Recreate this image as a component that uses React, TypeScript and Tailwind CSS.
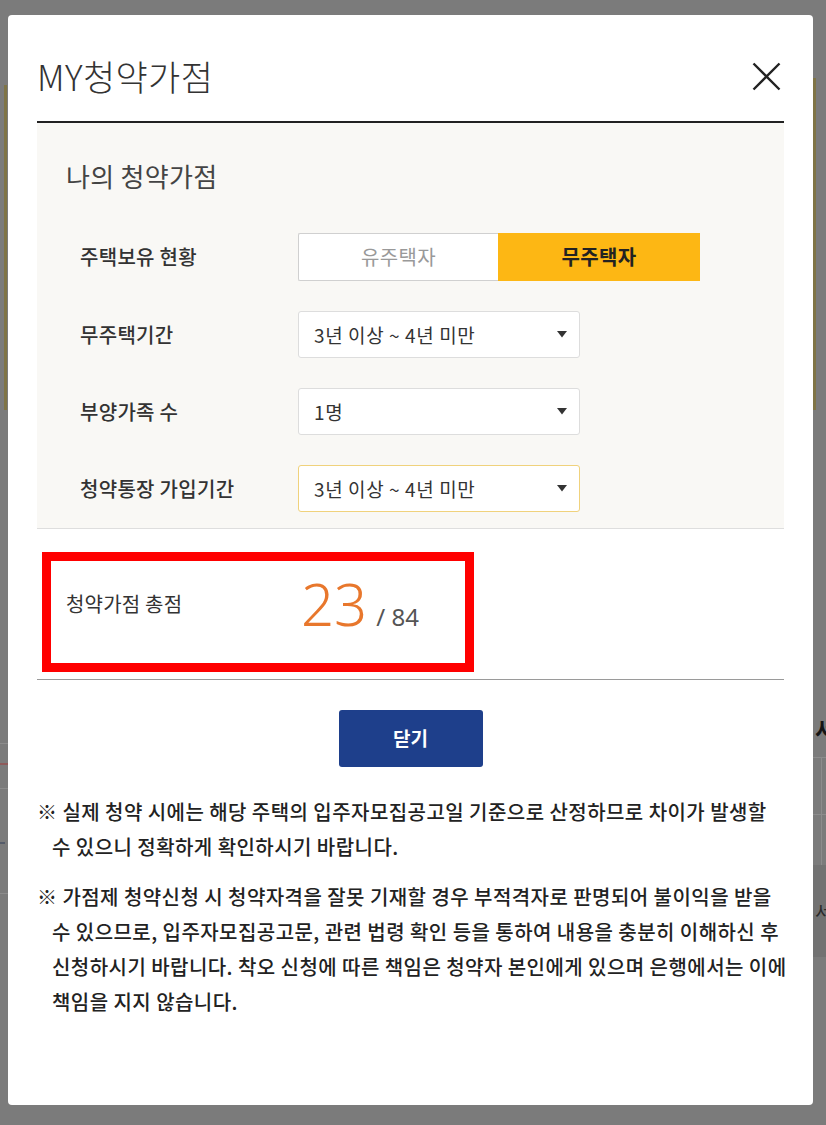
import React from "react";

const KR = "font-['Noto_Sans_CJK_KR','Noto_Sans',sans-serif]";

function Caret() {
  return (
    <svg width="10" height="7" viewBox="0 0 10 7" className="shrink-0">
      <polygon points="0,0 10,0 5,6.5" fill="#333" />
    </svg>
  );
}

function SelectBox({ value, active }: { value: string; active?: boolean }) {
  return (
    <div
      className={
        "w-[282px] h-[47px] bg-white rounded-[3px] border flex items-center justify-between pl-[15px] pr-[12px] " +
        (active ? "border-[#f0d27c]" : "border-[#dddddd]")
      }
    >
      <span className="text-[19px] tracking-[0.6px] text-[#333] leading-none">{value}</span>
      <Caret />
    </div>
  );
}

function Row({ label, children }: { label: string; children: React.ReactNode }) {
  return (
    <div className="flex items-center">
      <div className="w-[232px] pl-[14px] text-[20px] tracking-[0.3px] font-medium text-[#333] leading-none">{label}</div>
      {children}
    </div>
  );
}

export default function App() {
  return (
    <div className={"w-[826px] h-[1125px] bg-[#7b7b7b] flex overflow-hidden " + KR}>
      {/* left strip of background page */}
      <div className="w-[8px] shrink-0 flex flex-col">
        <div className="mt-[85px] ml-[4px] w-[3px] h-[325px] bg-[#7f7446]" />
        <div className="mt-[333px] h-px bg-[#8c8c8c]" />
        <div className="mt-[19px] h-[2px] bg-[#8e5a5a]" />
        <div className="mt-[23px] h-px bg-[#8c8c8c]" />
        <div className="mt-[53px] h-[2px] w-[5px] bg-[#555c6a]" />
        <div className="mt-[49px] h-px bg-[#8c8c8c]" />
      </div>

      {/* modal */}
      <div className="mt-[15px] w-[805px] h-[1090px] shrink-0 bg-white rounded-[4px] px-[29px] flex flex-col">
        {/* header */}
        <div className="pt-[40px] pb-[24px] flex items-center justify-between border-b-2 border-[#222]">
          <h1 className="text-[35px] leading-[42px] font-light text-[#333] tracking-[0.4px]">MY청약가점</h1>
          <svg width="29" height="29" viewBox="0 0 29 29" className="mr-[3px]">
            <path d="M1.5 1.5 L27.5 27.5 M27.5 1.5 L1.5 27.5" stroke="#222" strokeWidth="2.4" strokeLinecap="butt" />
          </svg>
        </div>

        {/* panel */}
        <div className="bg-[#f9f8f5] border-b border-[#dedede] pl-[29px] pt-[35px] pb-[16px]">
          <h2 className="text-[26px] leading-[36px] tracking-[0.3px] text-[#444]">나의 청약가점</h2>
          <div className="mt-[39px] flex flex-col gap-[30px]">
            <Row label="주택보유 현황">
              <div className="flex h-[48px]">
                <div className="w-[200px] bg-white border border-r-0 border-[#d0d0d0] rounded-l-[2px] flex items-center justify-center text-[20px] tracking-[0.3px] text-[#999]">
                  유주택자
                </div>
                <div className="w-[202px] bg-[#fdb714] flex items-center justify-center text-[20px] tracking-[0.3px] font-bold text-[#222]">
                  무주택자
                </div>
              </div>
            </Row>
            <Row label="무주택기간">
              <SelectBox value="3년 이상 ~ 4년 미만" />
            </Row>
            <Row label="부양가족 수">
              <SelectBox value="1명" />
            </Row>
            <Row label="청약통장 가입기간">
              <SelectBox value="3년 이상 ~ 4년 미만" active />
            </Row>
          </div>
        </div>

        {/* score */}
        <div className="relative h-[151px] border-b border-[#9a9a9a] flex items-center pl-[29px]">
          <div className="w-[235px] text-[20px] tracking-[0.2px] text-[#333] leading-none">청약가점 총점</div>
          <div className="flex items-baseline">
            <span className="font-['Noto_Sans',sans-serif] font-light text-[58px] leading-none text-[#e8772c]">23</span>
            <span className="ml-[9px] font-['Noto_Sans',sans-serif] text-[24px] leading-none text-[#555]">/ 84</span>
          </div>
          <div className="absolute left-[5px] top-[23px] w-[432px] h-[120px] border-[9px] border-[#ff0000] pointer-events-none" />
        </div>

        {/* close button */}
        <div className="mt-[30px] flex justify-center">
          <button className="w-[144px] h-[57px] bg-[#1e3f8b] rounded-[3px] text-white text-[19px] font-bold">닫기</button>
        </div>

        {/* notes */}
        <div className="mt-[27px] text-[20px] tracking-[0.45px] leading-[35px] text-[#222] font-medium">
          <p className="pl-[15px] -indent-[15px] whitespace-nowrap">
            ※ 실제 청약 시에는 해당 주택의 입주자모집공고일 기준으로 산정하므로 차이가 발생할
            <br />
            수 있으니 정확하게 확인하시기 바랍니다.
          </p>
          <p className="mt-[15px] pl-[15px] -indent-[15px] whitespace-nowrap">
            ※ 가점제 청약신청 시 청약자격을 잘못 기재할 경우 부적격자로 판명되어 불이익을 받을
            <br />
            수 있으므로, 입주자모집공고문, 관련 법령 확인 등을 통하여 내용을 충분히 이해하신 후
            <br />
            신청하시기 바랍니다. 착오 신청에 따른 책임은 청약자 본인에게 있으며 은행에서는 이에
            <br />
            책임을 지지 않습니다.
          </p>
        </div>
      </div>

      {/* right strip of background page */}
      <div className="w-[13px] shrink-0 flex flex-col overflow-hidden">
        <div className="mt-[78px] w-[3px] h-[332px] bg-[#7f7446]" />
        <div className="mt-[298px] pl-[2px] h-[40px] text-[22px] font-bold leading-[40px] text-[#151515] whitespace-nowrap">서</div>
        <div className="mt-[9px] h-px bg-[#8c8c8c]" />
        <div className="flex h-[56px]">
          <div className="ml-[8px] w-px bg-[#8c8c8c]" />
        </div>
        <div className="h-px bg-[#8c8c8c]" />
        <div className="flex h-[50px]">
          <div className="ml-[8px] w-px bg-[#8c8c8c]" />
        </div>
        <div className="h-[92px] bg-[#727272] flex items-center pl-[2px]">
          <span className="text-[18px] leading-none text-[#2a2a2a] whitespace-nowrap">서</span>
        </div>
      </div>
    </div>
  );
}
